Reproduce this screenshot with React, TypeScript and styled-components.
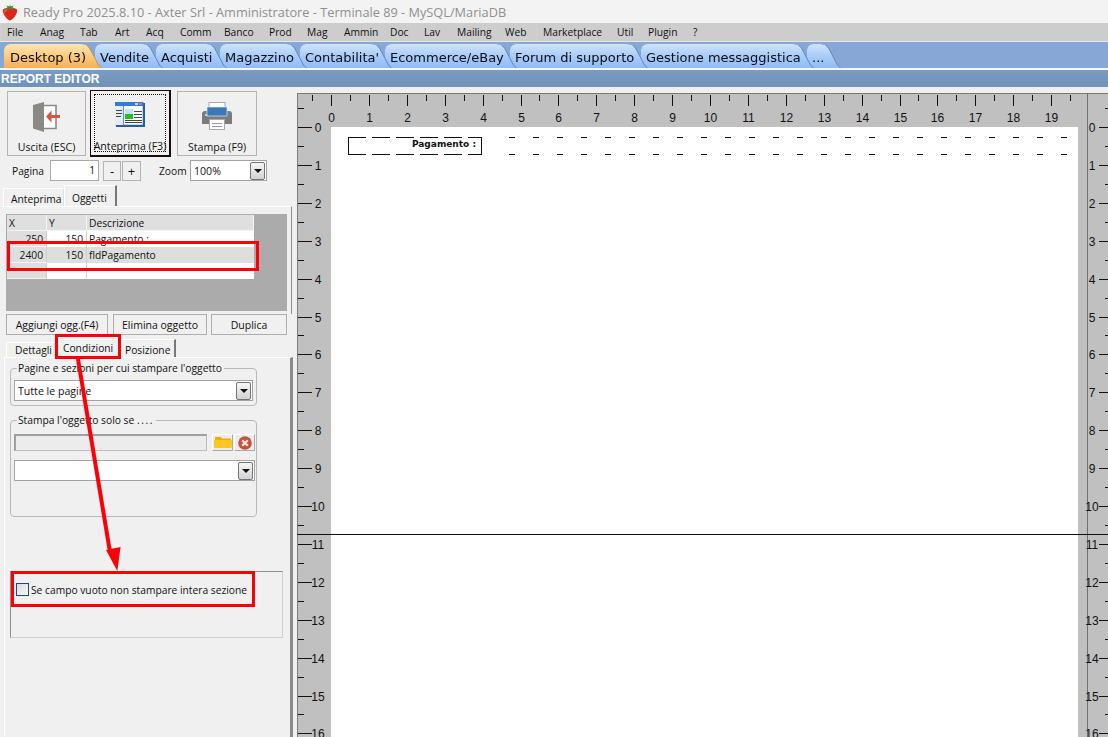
import React from "react";
import styled, { createGlobalStyle } from "styled-components";

const Global = createGlobalStyle`
  html, body { margin: 0; padding: 0; height: 100%; background: #f0f0f0; overflow: hidden; }
  #root { height: 100%; }
  * { box-sizing: border-box; }
`;

const UI = `"Open Sans", "Noto Sans", "Liberation Sans", sans-serif`;

const Window = styled.div`
  position: relative;
  width: 1108px;
  height: 737px;
  overflow: hidden;
  display: flex;
  flex-direction: column;
  font-family: ${UI};
  font-size: 10.25px;
  color: #111;
  background: #f0f0f0;
`;
const TitleBar = styled.div`
  height: 23px;
  flex: none;
  background: #f3f3f3;
  display: flex;
  align-items: center;
  padding-left: 2px;
  gap: 5px;
  color: #8f8f8f;
  font-size: 12.75px;
`;
const MenuBar = styled.div`
  height: 19px;
  flex: none;
  background: #cdcdcd;
  display: flex;
  align-items: center;
  padding-left: 7px;
  border-bottom: 1px solid #e6e6e6;
`;
const MenuItem = styled.span<{ $w: number }>`
  width: ${(p) => p.$w}px;
  flex: none;
  white-space: nowrap;
`;
const TabBar = styled.div`
  height: 28px;
  flex: none;
  background: #87a8d6;
  display: flex;
  align-items: flex-end;
  padding-left: 4px;
  border-bottom: 2px solid #f2f6fb;
`;
const TopTab = styled.div<{ $w: number; $active?: boolean; $z: number }>`
  position: relative;
  width: ${(p) => p.$w}px;
  height: 24px;
  margin-right: -6px;
  flex: none;
  font-family: "DejaVu Sans", sans-serif;
  font-size: 13px;
  line-height: 27px;
  padding-left: ${(p) => (p.$active ? 6 : 5)}px;
  white-space: nowrap;
  color: #0c0c14;
  z-index: ${(p) => p.$z};
  filter: drop-shadow(1px 0 0 ${(p) => (p.$active ? "#c98f4a" : "#5f86bf")});
  &::before {
    content: "";
    position: absolute;
    inset: 0;
    z-index: -1;
    background: ${(p) =>
      p.$active
        ? "linear-gradient(#fde6b4, #fccb80 50%, #f7ae52)"
        : "linear-gradient(#cfe3fc, #a9ccf8 50%, #8fbcf7)"};
    clip-path: polygon(
      0 6px, 1px 3px, 3px 1px, 6px 0,
      calc(100% - 20px) 0, calc(100% - 15px) 1px, calc(100% - 12px) 4px,
      calc(100% - 3px) 21px, 100% 100%, 0 100%
    );
  }
`;
const SectionBar = styled.div`
  height: 17px;
  flex: none;
  background: linear-gradient(#7b9cc2, #6f92ba);
  color: #fff;
  font-family: "Liberation Sans", sans-serif;
  font-weight: bold;
  font-size: 12px;
  line-height: 18px;
  padding-left: 1px;
`;
const Workspace = styled.div`
  flex: 1;
  display: flex;
  min-height: 0;
`;
const Side = styled.div`
  width: 297px;
  flex: none;
  display: flex;
  flex-direction: column;
  background: #f0f0f0;
  padding-top: 3px;
`;
const Toolbar = styled.div`
  display: flex;
  padding-left: 7px;
  height: 67px;
  align-items: center;
  flex: none;
`;
const BigButton = styled.div<{ $w: number; $ml: number; $focus?: boolean }>`
  width: ${(p) => p.$w}px;
  height: ${(p) => (p.$focus ? 67 : 65)}px;
  margin-left: ${(p) => p.$ml}px;
  flex: none;
  position: relative;
  display: flex;
  flex-direction: column;
  align-items: center;
  justify-content: space-between;
  padding: ${(p) => (p.$focus ? 11 : 10)}px 0 ${(p) => (p.$focus ? 2 : 1)}px;
  background: #f0f0f0;
  border: ${(p) => (p.$focus ? "1px solid #1a0a0a" : "1px solid #b4b4b4")};
  border-right-width: ${(p) => (p.$focus ? 2 : 1)}px;
  border-bottom-width: ${(p) => (p.$focus ? 2 : 1)}px;
  white-space: nowrap;
  font-size: 10.6px;
`;
const FocusRing = styled.div`
  position: absolute;
  inset: 3px;
  border: 1px dotted #111;
  pointer-events: none;
`;
const PageRow = styled.div`
  display: flex;
  align-items: center;
  height: 21px;
  margin-top: 3px;
  padding-left: 12px;
  flex: none;
`;
const RowLabel = styled.span<{ $w: number; $ml?: number }>`
  width: ${(p) => p.$w}px;
  margin-left: ${(p) => p.$ml ?? 0}px;
  flex: none;
`;
const NumberBox = styled.div`
  width: 49px;
  height: 21px;
  flex: none;
  background: #fff;
  border: 1px solid #a9a9a9;
  text-align: right;
  padding-right: 3px;
  line-height: 18px;
`;
const StepButton = styled.div<{ $w: number; $ml: number }>`
  width: ${(p) => p.$w}px;
  margin-left: ${(p) => p.$ml}px;
  height: 20px;
  flex: none;
  background: #f0f0f0;
  border: 1px solid #b4b4b4;
  text-align: center;
  font-size: 13px;
  line-height: 18px;
`;
const Combo = styled.div<{ $w: number }>`
  width: ${(p) => p.$w}px;
  height: 21px;
  flex: none;
  background: #fff;
  border: 1px solid #a3a3a3;
  display: flex;
  align-items: center;
  justify-content: space-between;
  padding: 0 1px 0 3px;
  font-size: 10.6px;
`;
const ComboArrow = styled.div`
  width: 15px;
  height: 18px;
  margin-left: auto;
  flex: none;
  border: 1px solid #70757c;
  border-radius: 2px;
  background: linear-gradient(#f6f6f6, #d2d2d2);
  display: flex;
  align-items: center;
  justify-content: center;
  &::after {
    content: "";
    border-left: 4px solid transparent;
    border-right: 4px solid transparent;
    border-top: 4px solid #111;
  }
`;
const TabStrip = styled.div<{ $h: number; $mt: number; $pl: number }>`
  display: flex;
  align-items: flex-end;
  height: ${(p) => p.$h}px;
  margin-top: ${(p) => p.$mt}px;
  padding-left: ${(p) => p.$pl}px;
  flex: none;
`;
const SmallTab = styled.div<{ $w: number; $h: number; $active?: boolean; $pl: number; $pt: number }>`
  width: ${(p) => p.$w}px;
  height: ${(p) => p.$h}px;
  flex: none;
  padding-left: ${(p) => p.$pl}px;
  padding-top: ${(p) => p.$pt}px;
  background: #f0f0f0;
  border-top: 1px solid #fff;
  border-left: 1px solid #fff;
  border-right: ${(p) => (p.$active ? "2px solid #777" : "1px solid #e0e0e0")};
  white-space: nowrap;
`;
const ObjectPanel = styled.div`
  width: 290px;
  margin-left: 2px;
  border-top: 1px solid #fff;
  border-right: 1px solid #8d8d8d;
  padding: 7px 0 0 4px;
  flex: none;
  height: 108px;
`;
const GridArea = styled.div`
  width: 281px;
  height: 97px;
  background: #ababab;
  padding: 1px;
`;
const GridTable = styled.div`
  width: 247px;
  display: grid;
  grid-template-columns: 40px 40px 167px;
  grid-auto-rows: 16px;
  background: #fff;
`;
const HeadCell = styled.div`
  background: #dfdfdf;
  border-right: 1px solid #f4f4f4;
  border-bottom: 1px solid #f4f4f4;
  padding-left: 2px;
  line-height: 17px;
`;
const NumCell = styled.div<{ $fixed?: boolean; $sel?: boolean }>`
  background: ${(p) => (p.$fixed || p.$sel ? "#dedede" : "#fff")};
  border-right: 1px solid #cfcfcf;
  border-bottom: 1px solid ${(p) => (p.$fixed ? "#f4f4f4" : p.$sel ? "#dedede" : "#fff")};
  text-align: right;
  padding-right: 3px;
  line-height: 17px;
`;
const TextCell = styled.div<{ $sel?: boolean }>`
  background: ${(p) => (p.$sel ? "#dedede" : "#fff")};
  padding-left: 2px;
  line-height: 17px;
`;
const ActionRow = styled.div`
  display: flex;
  padding-left: 6px;
  height: 21px;
  flex: none;
`;
const ActionButton = styled.div<{ $w: number; $ml?: number }>`
  width: ${(p) => p.$w}px;
  margin-left: ${(p) => p.$ml ?? 0}px;
  flex: none;
  background: #f0f0f0;
  border: 1px solid #aeaeae;
  text-align: center;
  line-height: 21px;
  white-space: nowrap;
  font-size: 10.5px;
`;
const DetailPanel = styled.div`
  flex: 1;
  margin-left: 4px;
  margin-right: 4px;
  border-top: 1px solid #fff;
  border-left: 1px solid #fff;
  border-right: 3px solid #8a8a8a;
  padding: 10px 0 0 5px;
  min-height: 0;
`;
const Group = styled.fieldset<{ $h: number; $mt?: number }>`
  position: relative;
  width: 247px;
  min-width: 0;
  height: ${(p) => p.$h}px;
  margin: ${(p) => p.$mt ?? 0}px 0 0;
  padding: 0 3px;
  border: 1px solid #b9b9b9;
  border-radius: 4px;
`;
const Legend = styled.div`
  position: absolute;
  left: 6px;
  top: -7px;
  background: #f0f0f0;
  padding: 0 2px 0 1px;
  line-height: 13px;
  white-space: nowrap;
`;
const Dots = styled.span`
  letter-spacing: 1.6px;
`;
const Pad = styled.div<{ $h: number }>`
  height: ${(p) => p.$h}px;
`;
const PathRow = styled.div`
  display: flex;
  align-items: stretch;
  height: 17px;
`;
const PathBox = styled.div`
  width: 193px;
  flex: none;
  background: #ececec;
  border: 1px solid #bdbdbd;
  border-top: 2px solid #9f9f9f;
  border-left: 2px solid #9f9f9f;
`;
const IconButton = styled.div<{ $ml: number }>`
  width: 21px;
  margin-left: ${(p) => p.$ml}px;
  flex: none;
  background: #ececec;
  border-right: 1px solid #aaa;
  border-bottom: 1px solid #aaa;
  border-top: 1px solid #fff;
  border-left: 1px solid #fff;
  display: flex;
  align-items: center;
  justify-content: center;
`;
const CheckPanel = styled.div`
  width: 273px;
  height: 67px;
  margin-top: 54px;
  border: 1px solid #cfcfcf;
  border-top: 1px solid #8f8f8f;
  border-left: 1px solid #8f8f8f;
  display: flex;
  align-items: flex-start;
  padding: 11px 0 0 5px;
  gap: 2px;
`;
const CheckBox = styled.div`
  width: 13px;
  height: 13px;
  flex: none;
  border: 1px solid #1f4a7a;
  background: linear-gradient(135deg, #dcdcdc, #f6f6f6);
`;
const Callout = styled.div`
  position: absolute;
  border: 3px solid #fb0007;
  pointer-events: none;
  z-index: 5;
`;
const CalloutRow = styled(Callout)`
  left: 7px;
  top: 241px;
  width: 252px;
  height: 30px;
`;
const CalloutTab = styled(Callout)`
  left: 55px;
  top: 334px;
  width: 66px;
  height: 25px;
`;
const CalloutCheck = styled(Callout)`
  left: 11px;
  top: 571px;
  width: 244px;
  height: 36px;
`;
const Overlay = styled.svg`
  position: absolute;
  left: 0;
  top: 0;
  pointer-events: none;
  z-index: 6;
`;
const Canvas = styled.div`
  flex: 1;
  position: relative;
  background: #c0c0c0;
  margin-top: 5px;
  overflow: hidden;
`;
const Drawing = styled.svg`
  display: block;
  font-family: "Liberation Sans", sans-serif;
  font-size: 12px;
`;

const menus: [string, number][] = [
  ["File", 33], ["Anag", 40], ["Tab", 35], ["Art", 31], ["Acq", 34], ["Comm", 44], ["Banco", 45],
  ["Prod", 38], ["Mag", 37], ["Ammin", 46], ["Doc", 34], ["Lav", 33], ["Mailing", 48], ["Web", 38],
  ["Marketplace", 74], ["Util", 31], ["Plugin", 45], ["?", 12],
];
const tabs: [string, number][] = [
  ["Desktop (3)", 97], ["Vendite", 67], ["Acquisti", 70], ["Magazzino", 86], ["Contabilita'", 91],
  ["Ecommerce/eBay", 131], ["Forum di supporto", 137], ["Gestione messaggistica", 172], ["...", 33],
];

function Strawberry() {
  return (
    <svg width="16" height="18" viewBox="0 0 16 18">
      <path d="M1 6.5C3 4.5 13 4.5 15 6.5C16 10 12 16 8 17.5C4 16 0 10 1 6.5Z" fill="#e2231a" />
      <path d="M2 6.5C4 5.5 6 5.5 7 6C5 7 3 9 3 11C2 9.5 1.6 8 2 6.5Z" fill="#f0503f" />
      <path d="M8 1L8.5 3.5L11.5 2.5L10.5 4.5L13.5 5.5L10.5 6.5L8 5.7L5.5 6.5L2.5 5.5L5.5 4.5L4.5 2.5L7.5 3.5Z" fill="#3f8f2a" />
    </svg>
  );
}
function ExitIcon() {
  return (
    <svg width="28" height="30" viewBox="0 0 28 30">
      <path d="M11 3.5H23V26.5H11" fill="#fff" stroke="#8a8a8a" strokeWidth="1.6" />
      <path d="M0 3L11 0V30L0 26.5Z" fill="#8b8984" />
      <path d="M27 13H17V16H27Z" fill="#d9543b" />
      <path d="M18.5 8.5L13 14.5L18.5 20.5Z" fill="#d9543b" />
    </svg>
  );
}
function PreviewIcon() {
  return (
    <svg width="30" height="25" viewBox="0 0 30 25">
      <rect x="1" y="1" width="29" height="24" fill="#2a5aa0" />
      <rect x="0" y="0" width="28" height="23" fill="#fff" stroke="#3b6fb5" strokeWidth=".6" />
      <rect x="0" y="0" width="28" height="4" fill="#2f7fd0" />
      <rect x="20" y="1" width="3" height="2" fill="#bcd9f5" />
      <rect x="24" y="1" width="3" height="2" fill="#d9793f" />
      <rect x="0" y="4" width="8" height="19" fill="#e4edf6" />
      <rect x="8" y="4" width="1" height="19" fill="#5f8fbf" />
      <rect x="10" y="7" width="8" height="5" fill="#bfe3f7" />
      <rect x="10" y="12" width="8" height="5" fill="#1fc11f" />
      <g fill="#444">
        <rect x="1" y="8" width="6" height="1" /><rect x="1" y="11" width="6" height="1" /><rect x="1" y="14" width="5" height="1" />
        <rect x="19" y="9" width="8" height="1" /><rect x="19" y="12" width="8" height="1" /><rect x="19" y="15" width="8" height="1" />
        <rect x="10" y="18" width="17" height="1" /><rect x="10" y="20" width="17" height="1" />
      </g>
    </svg>
  );
}
function PrinterIcon() {
  return (
    <svg width="30" height="28" viewBox="0 0 30 28">
      <rect x="7" y=".5" width="16" height="9" fill="#fff" stroke="#a8a8a8" />
      <path d="M3 9H27A3 3 0 0 1 30 12V22H0V12A3 3 0 0 1 3 9Z" fill="#7b7b7b" />
      <path d="M5 5H25V14H5Z" fill="#3c76b8" stroke="#dfe9f5" strokeWidth=".7" />
      <circle cx="4" cy="13" r="1" fill="#e6e6e6" />
      <rect x="7.5" y="17.5" width="15" height="10" fill="#fff" stroke="#a8a8a8" />
      <rect x="10" y="21" width="10" height="1" fill="#9a9a9a" /><rect x="10" y="24" width="10" height="1" fill="#9a9a9a" />
    </svg>
  );
}
function FolderIcon() {
  return (
    <svg width="18" height="11" viewBox="0 0 18 11">
      <path d="M1 0H7L8 1.5H17V10.5H1Z" fill="#f2a90f" />
      <path d="M0 3H18V9.5Q18 11 16.5 11H1.5Q0 11 0 9.5Z" fill="#fdc81e" />
    </svg>
  );
}
function ClearIcon() {
  return (
    <svg width="14" height="14" viewBox="0 0 14 14">
      <circle cx="7" cy="7" r="6.8" fill="#c8503c" />
      <path d="M4.2 4.2L9.8 9.8M9.8 4.2L4.2 9.8" stroke="#f6e8e4" strokeWidth="2.2" />
    </svg>
  );
}

const STEP = 37.9;
const ORIGIN_X = 34; // 331 on the page
const ORIGIN_Y = 35; // 127 on the page
const W = 811;
const H = 645;

function Ruler() {
  const xs = Array.from({ length: 20 }, (_, i) => i);
  const ys = Array.from({ length: 17 }, (_, i) => i);
  const c = "#111";
  const dashX = (start: number, n: number) => Array.from({ length: n }, (_, i) => start + i * 24);
  const bigBoxL = 51;
  const bigBoxR = 184;
  const top = 45;
  const bottom = 62;
  return (
    <Drawing width={W} height={H} viewBox={`0 0 ${W} ${H}`}>
      <rect x="0" y="0" width={W} height={H} fill="#c0c0c0" />
      <rect x="0" y="0" width={W} height="1" fill="#f0f0f0" />
      <rect x="0" y="1" width={W} height="1" fill="#7a7a7a" />
      <rect x="0" y="1" width="1" height={H} fill="#7a7a7a" />
      <rect x={ORIGIN_X} y={ORIGIN_Y} width={1078 - 297 - ORIGIN_X} height={H} fill="#fff" />
      <rect x={1087 - 297} y="1" width="1" height={H} fill="#6f6f6f" />
      {xs.map((i) => {
        const x = Math.round(ORIGIN_X + i * STEP);
        const m = Math.round(ORIGIN_X + (i - 0.5) * STEP);
        return (
          <g key={i}>
            <rect x={m} y="3" width="1" height="6" fill={c} />
            <rect x={x} y="3" width="1" height="11" fill={c} />
            <text x={x + 0.5} y="30" textAnchor="middle" fill={c}>{i}</text>
          </g>
        );
      })}
      <rect x={Math.round(ORIGIN_X + 19.5 * STEP)} y="3" width="1" height="6" fill={c} />
      {ys.map((i) => {
        const y = Math.round(ORIGIN_Y + i * STEP);
        const m = Math.round(ORIGIN_Y + (i - 0.5) * STEP);
        return (
          <g key={i}>
            <rect x="1" y={m} width="6" height="1" fill={c} />
            <rect x="1" y={y} width="14" height="1" fill={c} />
            <text x={21} y={y + 4.5} textAnchor="middle" fill={c}>{i}</text>
            <rect x={808} y={m} width="3" height="1" fill={c} />
            <rect x={802} y={y} width="9" height="1" fill={c} />
            <text x={795} y={y + 4.5} textAnchor="middle" fill={c}>{i}</text>
          </g>
        );
      })}
      <rect x="0" y={534 - 92} width={W} height="1" fill="#111" />
      {[top, bottom].map((y) => (
        <g key={y}>
          {dashX(bigBoxL, 6).map((x) => (
            <rect key={x} x={x} y={y} width={Math.min(18, bigBoxR - x)} height="1" fill="#111" />
          ))}
          {dashX(509 - 297, 24).map((x) => (
            <rect key={x} x={x} y={y} width="6" height="1" fill="#111" />
          ))}
        </g>
      ))}
      <rect x={bigBoxL} y={top} width="1" height={bottom - top + 1} fill="#111" />
      <rect x={bigBoxR} y={top} width="1" height={bottom - top + 1} fill="#111" />
      <text x={476 - 297} y={147 - 92} textAnchor="end" fontFamily="'DejaVu Sans', sans-serif" fontWeight="bold" fontSize="9" fill="#111">Pagamento :</text>
    </Drawing>
  );
}

export default function App() {
  return (
    <Window>
      <Global />
      <TitleBar>
        <Strawberry />
        <span>Ready Pro 2025.8.10 - Axter Srl - Amministratore - Terminale 89 - MySQL/MariaDB</span>
      </TitleBar>
      <MenuBar>
        {menus.map(([m, w]) => (
          <MenuItem key={m} $w={w}>{m}</MenuItem>
        ))}
      </MenuBar>
      <TabBar>
        {tabs.map(([t, w], i) => (
          <TopTab key={t} $w={w} $active={i === 0} $z={20 - i}>{t}</TopTab>
        ))}
      </TabBar>
      <SectionBar>REPORT EDITOR</SectionBar>
      <Workspace>
        <Side>
          <Toolbar>
            <BigButton $w={79} $ml={0}>
              <ExitIcon />
              <span>Uscita (ESC)</span>
            </BigButton>
            <BigButton $w={81} $ml={4} $focus>
              <FocusRing />
              <PreviewIcon />
              <span>Anteprima (F3)</span>
            </BigButton>
            <BigButton $w={80} $ml={6}>
              <PrinterIcon />
              <span>Stampa (F9)</span>
            </BigButton>
          </Toolbar>
          <PageRow>
            <RowLabel $w={38}>Pagina</RowLabel>
            <NumberBox>1</NumberBox>
            <StepButton $w={18} $ml={4}>-</StepButton>
            <StepButton $w={19} $ml={1}>+</StepButton>
            <RowLabel $w={31} $ml={18}>Zoom</RowLabel>
            <Combo $w={77}>
              100%
              <ComboArrow />
            </Combo>
          </PageRow>
          <TabStrip $h={21} $mt={4} $pl={3}>
            <SmallTab $w={61} $h={18} $pl={7} $pt={3}>Anteprima</SmallTab>
            <SmallTab $w={53} $h={21} $pl={7} $pt={5} $active>Oggetti</SmallTab>
          </TabStrip>
          <ObjectPanel>
            <GridArea>
              <GridTable>
                <HeadCell>X</HeadCell><HeadCell>Y</HeadCell><HeadCell>Descrizione</HeadCell>
                <NumCell $fixed>250</NumCell><NumCell>150</NumCell><TextCell>Pagamento :</TextCell>
                <NumCell $fixed>2400</NumCell><NumCell $sel>150</NumCell><TextCell $sel>fldPagamento</TextCell>
                <NumCell $fixed /><NumCell /><TextCell />
              </GridTable>
            </GridArea>
          </ObjectPanel>
          <ActionRow>
            <ActionButton $w={102}>Aggiungi ogg.(F4)</ActionButton>
            <ActionButton $w={94} $ml={5}>Elimina oggetto</ActionButton>
            <ActionButton $w={76} $ml={4}>Duplica</ActionButton>
          </ActionRow>
          <TabStrip $h={19} $mt={3} $pl={6}>
            <SmallTab $w={49} $h={15} $pl={8} $pt={0}>Dettagli</SmallTab>
            <SmallTab $w={66} $h={18} $pl={7} $pt={1}>Condizioni</SmallTab>
            <SmallTab $w={55} $h={18} $pl={3} $pt={3} $active>Posizione</SmallTab>
          </TabStrip>
          <DetailPanel>
            <Group $h={38}>
              <Legend>Pagine e sezioni per cui stampare l'oggetto</Legend>
              <Pad $h={11} />
              <Combo $w={239}>
                Tutte le pagine
                <ComboArrow />
              </Combo>
            </Group>
            <Group $h={97} $mt={14}>
              <Legend>Stampa l'oggetto solo se <Dots>....</Dots></Legend>
              <Pad $h={13} />
              <PathRow>
                <PathBox />
                <IconButton $ml={5}><FolderIcon /></IconButton>
                <IconButton $ml={1}><ClearIcon /></IconButton>
              </PathRow>
              <Pad $h={9} />
              <Combo $w={241}>
                <ComboArrow />
              </Combo>
            </Group>
            <CheckPanel>
              <CheckBox />
              <span>Se campo vuoto non stampare intera sezione</span>
            </CheckPanel>
          </DetailPanel>
        </Side>
        <Canvas>
          <Ruler />
        </Canvas>
      </Workspace>
      <CalloutRow />
      <CalloutTab />
      <CalloutCheck />
      <Overlay width="300" height="600" viewBox="0 0 300 600">
        <path d="M78 359L110 552" stroke="#fb0007" strokeWidth="4" fill="none" />
        <path d="M106 550L120.6 547L117.3 571Z" fill="#fb0007" />
      </Overlay>
    </Window>
  );
}
